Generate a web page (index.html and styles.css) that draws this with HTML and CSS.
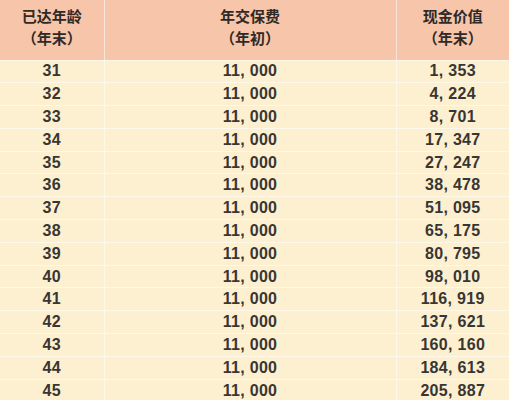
FILE: index.html
```html
<!DOCTYPE html>
<html lang="zh">
<head>
<meta charset="utf-8">
<link rel="stylesheet" href="styles.css">
</head>
<body>
<table class="tbl">
  <colgroup><col class="c1"><col class="c2"><col class="c3"></colgroup>
  <thead>
    <tr class="head"><th>已达年龄<br>（年末）</th><th>年交保费<br>（年初）</th><th>现金价值<br>（年末）</th></tr>
  </thead>
  <tbody>
    <tr><td>31</td><td>11, 000</td><td>1, 353</td></tr>
    <tr><td>32</td><td>11, 000</td><td>4, 224</td></tr>
    <tr><td>33</td><td>11, 000</td><td>8, 701</td></tr>
    <tr><td>34</td><td>11, 000</td><td>17, 347</td></tr>
    <tr><td>35</td><td>11, 000</td><td>27, 247</td></tr>
    <tr><td>36</td><td>11, 000</td><td>38, 478</td></tr>
    <tr><td>37</td><td>11, 000</td><td>51, 095</td></tr>
    <tr><td>38</td><td>11, 000</td><td>65, 175</td></tr>
    <tr><td>39</td><td>11, 000</td><td>80, 795</td></tr>
    <tr><td>40</td><td>11, 000</td><td>98, 010</td></tr>
    <tr><td>41</td><td>11, 000</td><td>116, 919</td></tr>
    <tr><td>42</td><td>11, 000</td><td>137, 621</td></tr>
    <tr><td>43</td><td>11, 000</td><td>160, 160</td></tr>
    <tr><td>44</td><td>11, 000</td><td>184, 613</td></tr>
    <tr><td>45</td><td>11, 000</td><td>205, 887</td></tr>
  </tbody>
</table>
</body>
</html>
```
FILE: styles.css
```css
html, body {
  margin: 0;
  padding: 0;
  background: #fdf0d1;
  overflow: hidden;
}
.tbl {
  width: 509px;
  border-collapse: collapse;
  table-layout: fixed;
  font-family: "Liberation Sans", "Noto Sans CJK SC", sans-serif;
  font-weight: bold;
  color: #383633;
}
.c1 { width: 104px; }
.c2 { width: 292px; }
.c3 { width: 113px; }
.tbl th, .tbl td {
  text-align: center;
  padding: 0;
  border: 1px solid rgba(255, 255, 255, 0.55);
}
.tbl th {
  background: #f7c5a9;
  height: 60px;
  box-sizing: border-box;
  padding-bottom: 4px;
  font-size: 15px;
  line-height: 22px;
  font-weight: bold;
  color: #2f2a27;
}
.tbl td {
  height: 22.8px;
  background: #fdf0d1;
  font-size: 16px;
  letter-spacing: 0.3px;
  line-height: 20px;
  box-sizing: border-box;
}
.tbl tr:first-child th { border-top: none; }
.tbl th:first-child, .tbl td:first-child { border-left: none; }
.tbl th:last-child, .tbl td:last-child { border-right: none; }
```
